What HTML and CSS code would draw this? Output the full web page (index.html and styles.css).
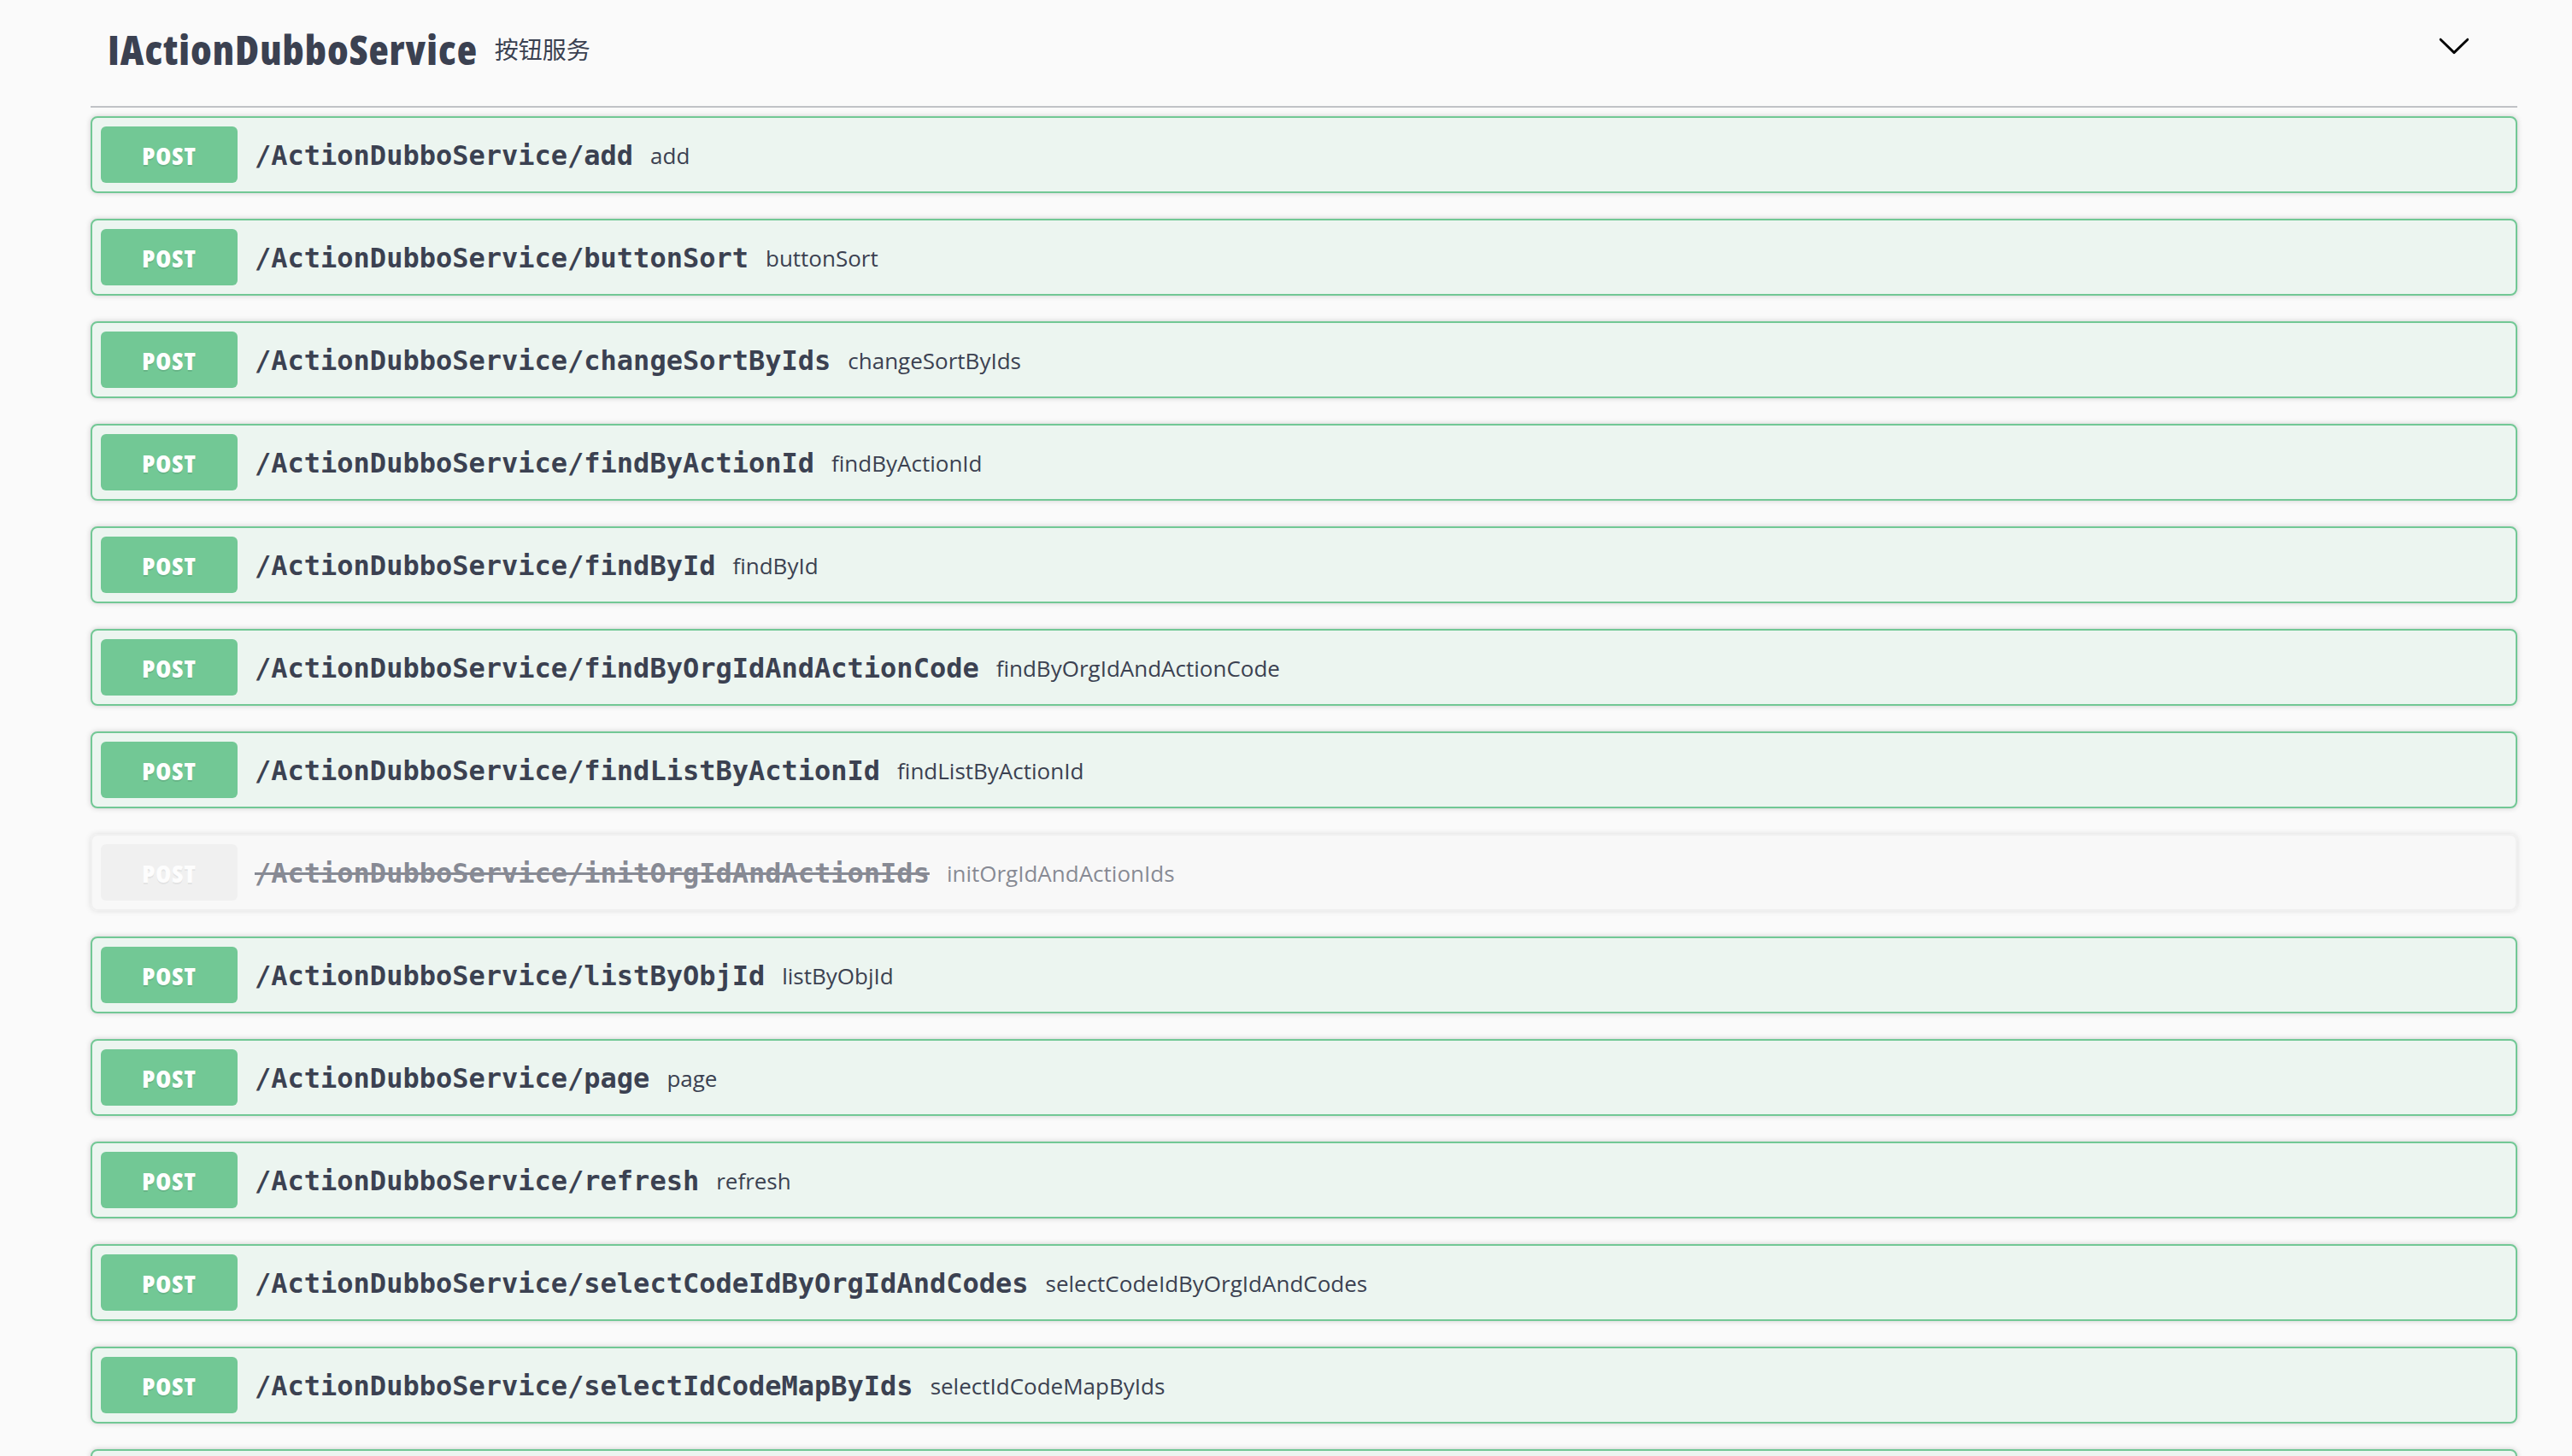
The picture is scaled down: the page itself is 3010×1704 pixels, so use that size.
FILE: index.html
```html
<!DOCTYPE html>
<html lang="en">
<head>
<meta charset="utf-8">
<title>IActionDubboService</title>
<link rel="stylesheet" href="styles.css">
</head>
<body>
<div class="wrap">
  <div class="tag">
    <span class="tag-name">IActionDubboService</span>
    <small class="tag-desc">按钮服务</small>
    <svg class="arrow" viewBox="0 0 20 20" width="40" height="40" aria-hidden="true"><path d="M17.418 6.109c.272-.268.709-.268.979 0s.271.701 0 .969l-7.908 7.830c-.27.268-.707.268-.979 0l-7.908-7.830c-.27-.268-.27-.701 0-.969.271-.268.709-.268.979 0L10 13.25l7.418-7.141z"/></svg>
  </div>
  <div class="ops">
    <div class="op"><span class="method">POST</span><span class="path">/ActionDubboService/add</span><span class="desc">add</span></div>
    <div class="op"><span class="method">POST</span><span class="path">/ActionDubboService/buttonSort</span><span class="desc">buttonSort</span></div>
    <div class="op"><span class="method">POST</span><span class="path">/ActionDubboService/changeSortByIds</span><span class="desc">changeSortByIds</span></div>
    <div class="op"><span class="method">POST</span><span class="path">/ActionDubboService/findByActionId</span><span class="desc">findByActionId</span></div>
    <div class="op"><span class="method">POST</span><span class="path">/ActionDubboService/findById</span><span class="desc">findById</span></div>
    <div class="op"><span class="method">POST</span><span class="path">/ActionDubboService/findByOrgIdAndActionCode</span><span class="desc">findByOrgIdAndActionCode</span></div>
    <div class="op"><span class="method">POST</span><span class="path">/ActionDubboService/findListByActionId</span><span class="desc">findListByActionId</span></div>
    <div class="op deprecated"><span class="method">POST</span><span class="path">/ActionDubboService/initOrgIdAndActionIds</span><span class="desc">initOrgIdAndActionIds</span></div>
    <div class="op"><span class="method">POST</span><span class="path">/ActionDubboService/listByObjId</span><span class="desc">listByObjId</span></div>
    <div class="op"><span class="method">POST</span><span class="path">/ActionDubboService/page</span><span class="desc">page</span></div>
    <div class="op"><span class="method">POST</span><span class="path">/ActionDubboService/refresh</span><span class="desc">refresh</span></div>
    <div class="op"><span class="method">POST</span><span class="path">/ActionDubboService/selectCodeIdByOrgIdAndCodes</span><span class="desc">selectCodeIdByOrgIdAndCodes</span></div>
    <div class="op"><span class="method">POST</span><span class="path">/ActionDubboService/selectIdCodeMapByIds</span><span class="desc">selectIdCodeMapByIds</span></div>
    <div class="op op-next"></div>
  </div>
</div>
</body>
</html>
```
FILE: styles.css
```css
html, body {
  margin: 0;
  padding: 0;
  overflow: hidden;
  background: #fafafa;
}
body {
  font-family: "Open Sans", "Noto Sans CJK SC", sans-serif;
  color: #3b4151;
}
.wrap {
  padding-left: 106px;
  width: 2840px;
}
.tag {
  display: flex;
  align-items: center;
  height: 114px;
  padding: 0 40px 10px 20px;
  border-bottom: 2px solid rgba(59, 65, 81, 0.3);
  margin-bottom: 10px;
}
.tag-name {
  font-family: "Liberation Sans Narrow", "Open Sans", sans-serif;
  font-stretch: condensed;
  font-weight: 800;
  font-size: 48px;
  letter-spacing: 1px;
  color: #3b4151;
}
.tag-desc {
  flex: 1;
  padding: 0 20px;
  font-size: 28px;
  font-family: "Open Sans", "Noto Sans CJK SC", sans-serif;
  color: #3b4151;
}
.arrow {
  fill: #000;
  margin: 0 14px 9px 0;
}
.ops {
  display: flex;
  flex-direction: column;
}
.op {
  display: flex;
  align-items: center;
  padding: 10px;
  margin: 0 0 30px;
  border: 2px solid #72c895;
  border-radius: 8px;
  background: #ecf5f0;
  box-shadow: 0 0 6px rgba(0, 0, 0, 0.19);
}
.op-next {
  min-height: 66px;
}
.method {
  display: flex;
  align-items: center;
  justify-content: center;
  width: 160px;
  height: 66px;
  border-radius: 6px;
  background: #72c895;
  color: #fff;
  font-family: "Liberation Sans Narrow", "Open Sans", sans-serif;
  font-stretch: condensed;
  font-weight: 800;
  font-size: 29px;
  letter-spacing: 1px;
  text-shadow: 0 2px 0 rgba(0, 0, 0, 0.1);
}
.path {
  padding: 2px 20px 0;
  font-family: "DejaVu Sans Mono", monospace;
  font-weight: 700;
  font-size: 32px;
  color: #3b4151;
}
.desc {
  flex: 1 1 auto;
  padding-top: 2px;
  font-size: 26px;
  color: #3b4151;
}
.op.deprecated {
  opacity: 0.6;
  background: rgba(235, 235, 235, 0.1);
  border-color: #ebebeb;
}
.op.deprecated .method {
  background: #ebebeb;
}
.op.deprecated .path {
  text-decoration: line-through;
  color: #3b4151;
}
```
